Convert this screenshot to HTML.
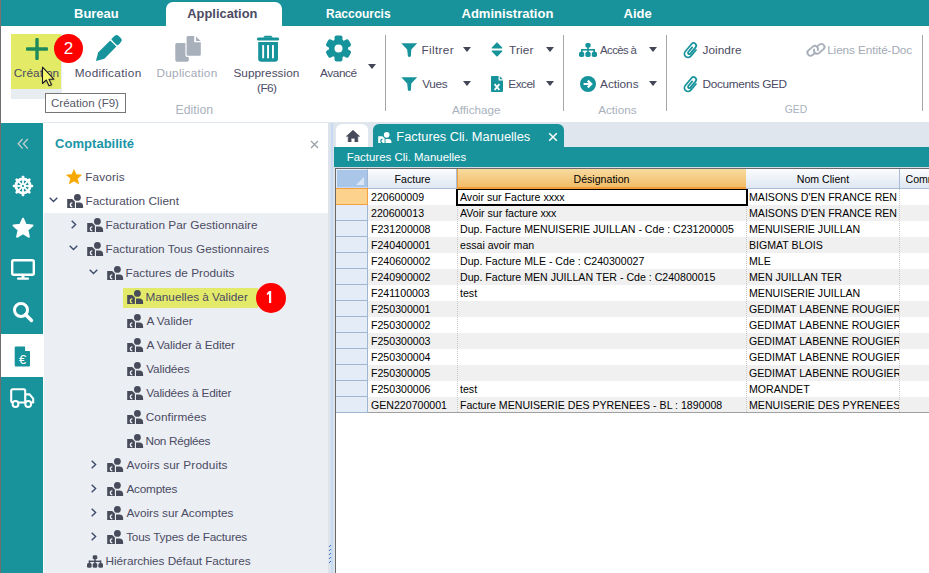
<!DOCTYPE html>
<html><head><meta charset="utf-8">
<style>
*{margin:0;padding:0;box-sizing:border-box}
html,body{width:929px;height:573px;overflow:hidden;background:#fff;font-family:"Liberation Sans",sans-serif}
.a{position:absolute}
.t{position:absolute;white-space:nowrap;line-height:16px;height:16px}
.sep{position:absolute;width:1px;background:#a7a7a7;top:35px;height:76px}
.tri{position:absolute;width:0;height:0;border-left:4.5px solid transparent;border-right:4.5px solid transparent;border-top:5.2px solid #434656}
.g{position:absolute;font-size:10.6px;color:#000;line-height:16px;height:16px;white-space:nowrap;overflow:hidden}
</style></head><body>

<div class="a" style="left:0;top:0;width:929px;height:26px;background:#19939b"></div>
<div class="a" style="left:166px;top:2px;width:116px;height:24px;background:#fff;border-radius:7px 7px 0 0"></div>
<div class="t" style="left:74.09px;top:6px;font-size:12.93px;color:#fff;font-weight:bold;">Bureau</div>
<div class="t" style="left:187.31px;top:6px;font-size:12.88px;color:#4b4b63;font-weight:bold;">Application</div>
<div class="t" style="left:326.06px;top:6px;font-size:11.98px;color:#fff;font-weight:bold;">Raccourcis</div>
<div class="t" style="left:461.51px;top:6px;font-size:13.02px;color:#fff;font-weight:bold;">Administration</div>
<div class="t" style="left:623.61px;top:6px;font-size:13.00px;color:#fff;font-weight:bold;">Aide</div>
<div class="a" style="left:0;top:26px;width:1px;height:547px;background:#6e6e6e"></div>
<div class="a" style="left:0;top:0;width:1px;height:26px;background:#7d7070"></div>
<div class="a" style="left:43px;top:122px;width:886px;height:1px;background:#dfe6ee"></div>
<div class="a" style="left:11px;top:34px;width:51px;height:65px;background:#e8edf2"></div>
<div class="a" style="left:11px;top:34px;width:50px;height:55px;background:#e3ea66"></div>
<svg class="a" style="left:26px;top:38px" width="22" height="22"><rect x="9.3" y="0" width="3.4" height="22" rx="1" fill="#1e8a5c"/><rect x="0" y="9.3" width="22" height="3.4" rx="1" fill="#1e8a5c"/></svg>
<div class="t" style="left:13.71px;top:65px;font-size:11.80px;color:#4b4b63;letter-spacing:0.12px;">Création</div>
<svg class="a" style="left:90px;top:30px" width="36" height="36" viewBox="0 0 36 36"><g transform="translate(5.9 30.9) rotate(-45)" fill="#17939b"><path d="M0 0 L7.6 -4.4 H24.6 V4.4 H7.6 Z"/><rect x="26.1" y="-4.4" width="7.6" height="8.8" rx="2.6"/><rect x="26.1" y="-4.4" width="4" height="8.8"/></g></svg>
<div class="t" style="left:74.66px;top:65px;font-size:11.80px;color:#4b4b63;letter-spacing:0.33px;">Modification</div>
<svg class="a" style="left:170px;top:30px" width="36" height="36" viewBox="0 0 36 36"><rect x="5.3" y="12.9" width="13.5" height="18.8" rx="1.6" fill="#a8b0bb"/><path d="M16.6 7.4 a1.4 1.4 0 0 1 1.4 -1.4 H24.2 V12.2 H30.8 V24.4 a1.4 1.4 0 0 1 -1.4 1.4 H18 a1.4 1.4 0 0 1 -1.4 -1.4 Z" fill="#a8b0bb" stroke="#fff" stroke-width="2.4"/><path d="M16.6 7.4 a1.4 1.4 0 0 1 1.4 -1.4 H24.2 V12.2 H30.8 V24.4 a1.4 1.4 0 0 1 -1.4 1.4 H18 a1.4 1.4 0 0 1 -1.4 -1.4 Z" fill="#a8b0bb"/><path d="M26 6.4 L30.6 11 H26 Z" fill="#a8b0bb"/></svg>
<div class="t" style="left:156.56px;top:65px;font-size:11.80px;color:#a3aab5;letter-spacing:0.23px;">Duplication</div>
<div class="t" style="left:175.62px;top:102px;font-size:12.23px;color:#a9b1bd;">Edition</div>
<svg class="a" style="left:250px;top:30px" width="36" height="36" viewBox="0 0 36 36"><g fill="#17939b"><rect x="6.9" y="7.4" width="22.3" height="3.1" rx="1.5"/><path d="M13.3 7.8 L14.6 5.8 H21.4 L22.7 7.8 Z"/><path d="M8.2 11.9 H28 V28.7 a3 3 0 0 1 -3 3 H11.2 a3 3 0 0 1 -3 -3 Z"/></g><g fill="#fff"><rect x="12.2" y="15.1" width="1.9" height="13.2"/><rect x="17.1" y="15.1" width="1.9" height="13.2"/><rect x="22" y="15.1" width="1.9" height="13.2"/></g></svg>
<div class="t" style="left:233.41px;top:65px;font-size:11.80px;color:#4b4b63;letter-spacing:0.03px;">Suppression</div>
<div class="t" style="left:257.09px;top:80px;font-size:11.80px;color:#4b4b63;letter-spacing:-0.59px;">(F6)</div>
<svg class="a" style="left:325px;top:35px" width="27" height="27" viewBox="-13.5 -13.5 27 27"><g fill="#17939b"><circle r="9.5"/><rect x="-4" y="-13" width="8" height="26" rx="2"/><rect x="-4" y="-13" width="8" height="26" rx="2" transform="rotate(60)"/><rect x="-4" y="-13" width="8" height="26" rx="2" transform="rotate(120)"/></g><circle r="4" fill="#fff"/></svg>
<div class="t" style="left:320.00px;top:65px;font-size:11.80px;color:#4b4b63;letter-spacing:-0.40px;">Avancé</div>
<div class="tri" style="left:368px;top:64px"></div>
<div class="sep" style="left:385px"></div>
<svg class="a" style="left:401px;top:43px" width="17" height="14" viewBox="0 0 17 14"><path d="M0.3 0.2 H16.2 L10.3 6.6 L9.9 13.2 Q8.4 14.6 6.9 13.2 L6.2 6.6 Z" fill="#17939b"/></svg>
<div class="t" style="left:421.46px;top:42px;font-size:11.80px;color:#4b4b63;letter-spacing:0.33px;">Filtrer</div>
<div class="tri" style="left:463px;top:47px"></div>
<svg class="a" style="left:491px;top:42px" width="12" height="15" viewBox="0 0 12 15"><path d="M6 1 L10.8 5.9 H1.2 Z M1.2 9.1 H10.8 L6 14 Z" fill="#17939b" stroke="#17939b" stroke-width="1.1" stroke-linejoin="round"/></svg>
<div class="t" style="left:508.96px;top:42px;font-size:11.80px;color:#4b4b63;letter-spacing:0.18px;">Trier</div>
<div class="tri" style="left:546px;top:47px"></div>
<svg class="a" style="left:401px;top:77px" width="17" height="14" viewBox="0 0 17 14"><path d="M0.3 0.2 H16.2 L10.3 6.6 L9.9 13.2 Q8.4 14.6 6.9 13.2 L6.2 6.6 Z" fill="#17939b"/></svg>
<div class="t" style="left:422.28px;top:76px;font-size:11.80px;color:#4b4b63;letter-spacing:-0.35px;">Vues</div>
<div class="tri" style="left:463px;top:81px"></div>
<svg class="a" style="left:491px;top:76px" width="12" height="16" viewBox="0 0 12 16"><path d="M1 0 H7.6 V4.4 H12 V15 a1 1 0 0 1 -1 1 H1 a1 1 0 0 1 -1 -1 V1 a1 1 0 0 1 1 -1 Z" fill="#17939b"/><path d="M8.8 0.2 L11.8 3.2 H8.8 Z" fill="#17939b"/><path d="M3.6 8.2 L8.4 14 M8.4 8.2 L3.6 14" stroke="#fff" stroke-width="1.9"/></svg>
<div class="t" style="left:508.26px;top:76px;font-size:11.80px;color:#4b4b63;letter-spacing:-0.49px;">Excel</div>
<div class="tri" style="left:546px;top:81px"></div>
<div class="t" style="left:452.00px;top:102px;font-size:11.68px;color:#a9b1bd;">Affichage</div>
<div class="sep" style="left:563px"></div>
<svg class="a" style="left:579px;top:43px" width="18" height="14" viewBox="0 0 18 14"><g fill="#17939b"><rect x="6.4" y="0" width="5.2" height="4.6" rx="1.6"/><rect x="8.2" y="3" width="1.6" height="4"/><rect x="2" y="6" width="14" height="1.6"/><rect x="2" y="6" width="1.6" height="4"/><rect x="14.4" y="6" width="1.6" height="4"/><rect x="8.2" y="6" width="1.6" height="4"/><rect x="0" y="8.8" width="5.2" height="5.2" rx="1.7"/><rect x="6.4" y="8.8" width="5.2" height="5.2" rx="1.7"/><rect x="12.8" y="8.8" width="5.2" height="5.2" rx="1.7"/></g></svg>
<div class="t" style="left:600.10px;top:42px;font-size:11.35px;color:#4b4b63;letter-spacing:-0.60px;">Accès à</div>
<div class="tri" style="left:649px;top:47px"></div>
<svg class="a" style="left:580px;top:76px" width="16" height="16" viewBox="0 0 16 16"><circle cx="8" cy="8" r="8" fill="#17939b"/><path d="M3.6 8 H11 M7.8 4.6 L11.2 8 L7.8 11.4" stroke="#fff" stroke-width="2.2" fill="none"/></svg>
<div class="t" style="left:600.10px;top:76px;font-size:11.80px;color:#4b4b63;letter-spacing:-0.04px;">Actions</div>
<div class="tri" style="left:649px;top:81px"></div>
<div class="t" style="left:598.20px;top:102px;font-size:11.70px;color:#a9b1bd;">Actions</div>
<div class="sep" style="left:666px"></div>
<svg class="a" style="left:680px;top:38px" width="22" height="22" viewBox="0 0 22 22"><path transform="translate(11 12.3) rotate(40) translate(0 -8.6)" d="M3.6 5.2 V13.2 A3.6 3.6 0 0 1 -3.6 13.2 V3.4 A2.6 2.6 0 0 1 1.6 3.4 V11.6 A1.3 1.3 0 0 1 -1 11.6 V5.6" stroke="#17939b" stroke-width="1.75" fill="none" stroke-linecap="round"/></svg>
<div class="t" style="left:702.46px;top:42px;font-size:11.80px;color:#4b4b63;letter-spacing:0.05px;">Joindre</div>
<svg class="a" style="left:680px;top:72px" width="22" height="22" viewBox="0 0 22 22"><path transform="translate(11 12.3) rotate(40) translate(0 -8.6)" d="M3.6 5.2 V13.2 A3.6 3.6 0 0 1 -3.6 13.2 V3.4 A2.6 2.6 0 0 1 1.6 3.4 V11.6 A1.3 1.3 0 0 1 -1 11.6 V5.6" stroke="#17939b" stroke-width="1.75" fill="none" stroke-linecap="round"/></svg>
<div class="t" style="left:702.46px;top:76px;font-size:11.80px;color:#4b4b63;letter-spacing:-0.32px;">Documents GED</div>
<svg class="a" style="left:802px;top:38px" width="28" height="24" viewBox="0 0 28 24"><g stroke="#a9b0bb" stroke-width="1.9" fill="none" stroke-linecap="round"><path transform="translate(10.7 12.8) rotate(-40)" d="M0.3 3.1 H-2.8 A3.1 3.1 0 0 1 -2.8 -3.1 H2.8 A3.1 3.1 0 0 1 4.35 2.68"/><path transform="translate(17.2 10.8) rotate(140)" d="M0.3 3.1 H-2.8 A3.1 3.1 0 0 1 -2.8 -3.1 H2.8 A3.1 3.1 0 0 1 4.35 2.68"/></g></svg>
<div class="t" style="left:827.16px;top:42px;font-size:11.80px;color:#a3aab5;letter-spacing:-0.10px;">Liens Entité-Doc</div>
<div class="t" style="left:784.68px;top:102px;font-size:10.39px;color:#a9b1bd;">GED</div>
<div class="sep" style="left:922px"></div>
<div class="a" style="left:45px;top:93px;width:81px;height:20px;background:#fff;border:1px solid #767676"></div>
<div class="t" style="left:51.02px;top:95px;font-size:11.54px;color:#575766;">Création (F9)</div>
<div class="a" style="left:54px;top:34px;width:29px;height:29px;border-radius:50%;background:#fe0000"></div>
<div class="t" style="left:54px;top:40px;width:29px;text-align:center;color:#fff;font-size:17px;line-height:17px;height:17px">2</div>
<svg class="a" style="left:38px;top:63px" width="22" height="28" viewBox="0 0 22 28"><path transform="translate(5.5 5.2)" d="M0 0 V16.3 L3.8 12.8 L6.5 18.6 L9 17.6 L6.5 12 H11.3 Z" fill="#000" opacity="0.18" style="filter:blur(1px)" /><path transform="translate(4.5 4.2)" d="M0 0 V16.3 L3.8 12.8 L6.5 18.6 L9 17.6 L6.5 12 H11.3 Z" fill="#f8f86e" stroke="#1c1c2a" stroke-width="1.1" stroke-linejoin="round"/></svg>
<div class="a" style="left:1px;top:123px;width:42px;height:450px;background:#19939b"></div>
<div class="a" style="left:1px;top:334px;width:42px;height:43px;background:#fff"></div>
<div class="a" style="left:43px;top:123px;width:285px;height:90px;background:#fff"></div>
<div class="a" style="left:44px;top:213px;width:284px;height:360px;background:#ebeff4"></div>
<div class="a" style="left:328px;top:123px;width:7px;height:450px;background:#dce3ea"></div>
<div class="a" style="left:331px;top:123px;width:1.5px;height:450px;background:#c6daf3"></div>
<div class="a" style="left:335px;top:123px;width:594px;height:24px;background:#dfe6ee"></div>

<svg class="a" style="left:17px;top:138px" width="12" height="12" viewBox="0 0 12 12"><path d="M5.6 1 L1.2 5.8 L5.6 10.6 M10.8 1 L6.4 5.8 L10.8 10.6" stroke="#c4cfd0" stroke-width="1.3" fill="none"/></svg>
<svg class="a" style="left:12px;top:175px" width="22" height="22" viewBox="-11 -11 22 22"><g fill="#fff"><rect x="-1.3" y="-10.2" width="2.6" height="3" rx="0.8" transform="rotate(0)"/><rect x="-1.3" y="-10.2" width="2.6" height="3" rx="0.8" transform="rotate(45)"/><rect x="-1.3" y="-10.2" width="2.6" height="3" rx="0.8" transform="rotate(90)"/><rect x="-1.3" y="-10.2" width="2.6" height="3" rx="0.8" transform="rotate(135)"/><rect x="-1.3" y="-10.2" width="2.6" height="3" rx="0.8" transform="rotate(180)"/><rect x="-1.3" y="-10.2" width="2.6" height="3" rx="0.8" transform="rotate(225)"/><rect x="-1.3" y="-10.2" width="2.6" height="3" rx="0.8" transform="rotate(270)"/><rect x="-1.3" y="-10.2" width="2.6" height="3" rx="0.8" transform="rotate(315)"/><rect x="-0.9" y="-6.4" width="1.8" height="4.4" transform="rotate(0)"/><rect x="-0.9" y="-6.4" width="1.8" height="4.4" transform="rotate(45)"/><rect x="-0.9" y="-6.4" width="1.8" height="4.4" transform="rotate(90)"/><rect x="-0.9" y="-6.4" width="1.8" height="4.4" transform="rotate(135)"/><rect x="-0.9" y="-6.4" width="1.8" height="4.4" transform="rotate(180)"/><rect x="-0.9" y="-6.4" width="1.8" height="4.4" transform="rotate(225)"/><rect x="-0.9" y="-6.4" width="1.8" height="4.4" transform="rotate(270)"/><rect x="-0.9" y="-6.4" width="1.8" height="4.4" transform="rotate(315)"/></g><circle r="7.1" stroke="#fff" stroke-width="2.8" fill="none"/><circle r="2.7" fill="#fff"/><circle r="1.1" fill="#19939b"/></svg>
<svg class="a" style="left:12px;top:217px" width="22" height="22" viewBox="0 0 24 24"><path d="M12 2 L14.9 8.6 L22.2 9.3 L16.7 14.2 L18.3 21.4 L12 17.6 L5.7 21.4 L7.3 14.2 L1.8 9.3 L9.1 8.6 Z" fill="#fff" stroke="#fff" stroke-width="2.4" stroke-linejoin="round"/></svg>
<svg class="a" style="left:11px;top:259px" width="24" height="22" viewBox="0 0 24 22"><rect x="1.2" y="1.2" width="21.6" height="14.6" rx="1.5" fill="none" stroke="#fff" stroke-width="2.4"/><rect x="10.5" y="16" width="3" height="3" fill="#fff"/><rect x="6" y="18.5" width="12" height="2.2" rx="1" fill="#fff"/></svg>
<svg class="a" style="left:12px;top:301px" width="22" height="22" viewBox="0 0 22 22"><circle cx="9" cy="9" r="6.5" fill="none" stroke="#fff" stroke-width="3"/><path d="M13.5 13.5 L19.5 19.5" stroke="#fff" stroke-width="3.4" stroke-linecap="round"/></svg>
<svg class="a" style="left:14px;top:346px" width="17" height="21" viewBox="0 0 17 21"><path d="M1.5 0.4 H10.8 L16 5.6 V19.2 a1.2 1.2 0 0 1 -1.2 1.2 H1.9 a1.2 1.2 0 0 1 -1.2 -1.2 V1.6 a1.2 1.2 0 0 1 1.2 -1.2 Z" fill="#17939b"/><path d="M11.3 0.4 V5.1 H16" fill="#fff" stroke="#17939b" stroke-width="0"/><path d="M11.3 0.4 L16 5.1 H11.3 Z" fill="#fff"/><text x="8.6" y="18.4" font-family="Liberation Sans" font-size="13" fill="#fff" text-anchor="middle">&#8364;</text></svg>
<svg class="a" style="left:9px;top:387px" width="26" height="21" viewBox="0 0 26 21"><g fill="none" stroke="#fff" stroke-width="2.1" stroke-linejoin="round"><rect x="2.2" y="2.2" width="14" height="13.3" rx="1.6"/><path d="M16.2 7.4 H20.6 L24.2 11.6 V15.5 H16.2"/></g><circle cx="6.5" cy="17" r="2.9" fill="#19939b" stroke="#fff" stroke-width="2"/><circle cx="19.2" cy="17" r="2.9" fill="#19939b" stroke="#fff" stroke-width="2"/></svg>

<div class="t" style="left:55.08px;top:136px;font-size:13.06px;color:#1b95a6;font-weight:bold;">Comptabilité</div>
<svg class="a" style="left:310px;top:140px" width="9" height="9" viewBox="0 0 9 9"><path d="M1 1 L8 8 M8 1 L1 8" stroke="#9aa0a8" stroke-width="1.3"/></svg>
<svg class="a" style="left:66px;top:169px" width="16" height="16" viewBox="0 0 24 23"><path d="M12 0.5 L15.2 7.9 L23.2 8.6 L17.1 13.9 L19 21.8 L12 17.6 L5 21.8 L6.9 13.9 L0.8 8.6 L8.8 7.9 Z" fill="#f6a800" stroke="#f6a800" stroke-width="1" stroke-linejoin="round"/></svg>
<div class="t" style="left:85.26px;top:169px;font-size:11.80px;color:#4b4b63;letter-spacing:0.14px;">Favoris</div>
<div class="a" style="left:123px;top:288px;width:135px;height:20px;background:#e3ea6a"></div>
<svg class="a" style="left:49px;top:197px" width="9" height="6" viewBox="0 0 9 6"><path d="M0.7 0.7 L4.5 4.6 L8.3 0.7" stroke="#3e4c6b" stroke-width="1.4" fill="none"/></svg>
<svg class="a" style="left:67px;top:194px" width="17" height="14" viewBox="0 0 17 14"><circle cx="10.4" cy="3.4" r="3.4" fill="#474b5a"/><path d="M9 14 V8.5 H12.4 a3.7 3.6 0 0 1 3.7 3.6 V14 Z" fill="#474b5a"/><path d="M0.2 5 H5.2 L7.9 7.6 V14 H0.2 Z" fill="#474b5a"/><path d="M5.3 8.6 A2.5 2.2 0 0 0 5.3 12.9" stroke="#fff" stroke-width="1.45" fill="none"/></svg>
<div class="t" style="left:85.46px;top:193px;font-size:11.80px;color:#4b4b63;letter-spacing:0.06px;">Facturation Client</div>
<svg class="a" style="left:71px;top:220px" width="6" height="9" viewBox="0 0 6 9"><path d="M0.7 0.7 L4.6 4.5 L0.7 8.3" stroke="#3e4c6b" stroke-width="1.4" fill="none"/></svg>
<svg class="a" style="left:87px;top:218px" width="17" height="14" viewBox="0 0 17 14"><circle cx="10.4" cy="3.4" r="3.4" fill="#474b5a"/><path d="M9 14 V8.5 H12.4 a3.7 3.6 0 0 1 3.7 3.6 V14 Z" fill="#474b5a"/><path d="M0.2 5 H5.2 L7.9 7.6 V14 H0.2 Z" fill="#474b5a"/><path d="M5.3 8.6 A2.5 2.2 0 0 0 5.3 12.9" stroke="#ebeff4" stroke-width="1.45" fill="none"/></svg>
<div class="t" style="left:105.46px;top:217px;font-size:11.80px;color:#4b4b63;letter-spacing:0.05px;">Facturation Par Gestionnaire</div>
<svg class="a" style="left:69px;top:245px" width="9" height="6" viewBox="0 0 9 6"><path d="M0.7 0.7 L4.5 4.6 L8.3 0.7" stroke="#3e4c6b" stroke-width="1.4" fill="none"/></svg>
<svg class="a" style="left:87px;top:242px" width="17" height="14" viewBox="0 0 17 14"><circle cx="10.4" cy="3.4" r="3.4" fill="#474b5a"/><path d="M9 14 V8.5 H12.4 a3.7 3.6 0 0 1 3.7 3.6 V14 Z" fill="#474b5a"/><path d="M0.2 5 H5.2 L7.9 7.6 V14 H0.2 Z" fill="#474b5a"/><path d="M5.3 8.6 A2.5 2.2 0 0 0 5.3 12.9" stroke="#ebeff4" stroke-width="1.45" fill="none"/></svg>
<div class="t" style="left:105.46px;top:241px;font-size:11.80px;color:#4b4b63;letter-spacing:0.02px;">Facturation Tous Gestionnaires</div>
<svg class="a" style="left:89px;top:269px" width="9" height="6" viewBox="0 0 9 6"><path d="M0.7 0.7 L4.5 4.6 L8.3 0.7" stroke="#3e4c6b" stroke-width="1.4" fill="none"/></svg>
<svg class="a" style="left:107px;top:266px" width="17" height="14" viewBox="0 0 17 14"><circle cx="10.4" cy="3.4" r="3.4" fill="#474b5a"/><path d="M9 14 V8.5 H12.4 a3.7 3.6 0 0 1 3.7 3.6 V14 Z" fill="#474b5a"/><path d="M0.2 5 H5.2 L7.9 7.6 V14 H0.2 Z" fill="#474b5a"/><path d="M5.3 8.6 A2.5 2.2 0 0 0 5.3 12.9" stroke="#ebeff4" stroke-width="1.45" fill="none"/></svg>
<div class="t" style="left:125.46px;top:265px;font-size:11.80px;color:#4b4b63;letter-spacing:0.01px;">Factures de Produits</div>
<svg class="a" style="left:127px;top:290px" width="17" height="14" viewBox="0 0 17 14"><circle cx="10.4" cy="3.4" r="3.4" fill="#474b5a"/><path d="M9 14 V8.5 H12.4 a3.7 3.6 0 0 1 3.7 3.6 V14 Z" fill="#474b5a"/><path d="M0.2 5 H5.2 L7.9 7.6 V14 H0.2 Z" fill="#474b5a"/><path d="M5.3 8.6 A2.5 2.2 0 0 0 5.3 12.9" stroke="#e3ea6a" stroke-width="1.45" fill="none"/></svg>
<div class="t" style="left:145.46px;top:289px;font-size:11.80px;color:#4b4b63;letter-spacing:-0.02px;">Manuelles à Valider</div>
<svg class="a" style="left:127px;top:314px" width="17" height="14" viewBox="0 0 17 14"><circle cx="10.4" cy="3.4" r="3.4" fill="#474b5a"/><path d="M9 14 V8.5 H12.4 a3.7 3.6 0 0 1 3.7 3.6 V14 Z" fill="#474b5a"/><path d="M0.2 5 H5.2 L7.9 7.6 V14 H0.2 Z" fill="#474b5a"/><path d="M5.3 8.6 A2.5 2.2 0 0 0 5.3 12.9" stroke="#ebeff4" stroke-width="1.45" fill="none"/></svg>
<div class="t" style="left:146.40px;top:313px;font-size:11.80px;color:#4b4b63;letter-spacing:-0.01px;">A Valider</div>
<svg class="a" style="left:127px;top:338px" width="17" height="14" viewBox="0 0 17 14"><circle cx="10.4" cy="3.4" r="3.4" fill="#474b5a"/><path d="M9 14 V8.5 H12.4 a3.7 3.6 0 0 1 3.7 3.6 V14 Z" fill="#474b5a"/><path d="M0.2 5 H5.2 L7.9 7.6 V14 H0.2 Z" fill="#474b5a"/><path d="M5.3 8.6 A2.5 2.2 0 0 0 5.3 12.9" stroke="#ebeff4" stroke-width="1.45" fill="none"/></svg>
<div class="t" style="left:146.40px;top:337px;font-size:11.80px;color:#4b4b63;letter-spacing:-0.10px;">A Valider à Editer</div>
<svg class="a" style="left:127px;top:362px" width="17" height="14" viewBox="0 0 17 14"><circle cx="10.4" cy="3.4" r="3.4" fill="#474b5a"/><path d="M9 14 V8.5 H12.4 a3.7 3.6 0 0 1 3.7 3.6 V14 Z" fill="#474b5a"/><path d="M0.2 5 H5.2 L7.9 7.6 V14 H0.2 Z" fill="#474b5a"/><path d="M5.3 8.6 A2.5 2.2 0 0 0 5.3 12.9" stroke="#ebeff4" stroke-width="1.45" fill="none"/></svg>
<div class="t" style="left:146.28px;top:361px;font-size:11.80px;color:#4b4b63;letter-spacing:-0.15px;">Validées</div>
<svg class="a" style="left:127px;top:386px" width="17" height="14" viewBox="0 0 17 14"><circle cx="10.4" cy="3.4" r="3.4" fill="#474b5a"/><path d="M9 14 V8.5 H12.4 a3.7 3.6 0 0 1 3.7 3.6 V14 Z" fill="#474b5a"/><path d="M0.2 5 H5.2 L7.9 7.6 V14 H0.2 Z" fill="#474b5a"/><path d="M5.3 8.6 A2.5 2.2 0 0 0 5.3 12.9" stroke="#ebeff4" stroke-width="1.45" fill="none"/></svg>
<div class="t" style="left:146.28px;top:385px;font-size:11.80px;color:#4b4b63;letter-spacing:-0.20px;">Validées à Editer</div>
<svg class="a" style="left:127px;top:410px" width="17" height="14" viewBox="0 0 17 14"><circle cx="10.4" cy="3.4" r="3.4" fill="#474b5a"/><path d="M9 14 V8.5 H12.4 a3.7 3.6 0 0 1 3.7 3.6 V14 Z" fill="#474b5a"/><path d="M0.2 5 H5.2 L7.9 7.6 V14 H0.2 Z" fill="#474b5a"/><path d="M5.3 8.6 A2.5 2.2 0 0 0 5.3 12.9" stroke="#ebeff4" stroke-width="1.45" fill="none"/></svg>
<div class="t" style="left:145.81px;top:409px;font-size:11.80px;color:#4b4b63;letter-spacing:0.04px;">Confirmées</div>
<svg class="a" style="left:127px;top:434px" width="17" height="14" viewBox="0 0 17 14"><circle cx="10.4" cy="3.4" r="3.4" fill="#474b5a"/><path d="M9 14 V8.5 H12.4 a3.7 3.6 0 0 1 3.7 3.6 V14 Z" fill="#474b5a"/><path d="M0.2 5 H5.2 L7.9 7.6 V14 H0.2 Z" fill="#474b5a"/><path d="M5.3 8.6 A2.5 2.2 0 0 0 5.3 12.9" stroke="#ebeff4" stroke-width="1.45" fill="none"/></svg>
<div class="t" style="left:145.46px;top:433px;font-size:11.80px;color:#4b4b63;letter-spacing:-0.33px;">Non Réglées</div>
<svg class="a" style="left:91px;top:460px" width="6" height="9" viewBox="0 0 6 9"><path d="M0.7 0.7 L4.6 4.5 L0.7 8.3" stroke="#3e4c6b" stroke-width="1.4" fill="none"/></svg>
<svg class="a" style="left:107px;top:458px" width="17" height="14" viewBox="0 0 17 14"><circle cx="10.4" cy="3.4" r="3.4" fill="#474b5a"/><path d="M9 14 V8.5 H12.4 a3.7 3.6 0 0 1 3.7 3.6 V14 Z" fill="#474b5a"/><path d="M0.2 5 H5.2 L7.9 7.6 V14 H0.2 Z" fill="#474b5a"/><path d="M5.3 8.6 A2.5 2.2 0 0 0 5.3 12.9" stroke="#ebeff4" stroke-width="1.45" fill="none"/></svg>
<div class="t" style="left:126.40px;top:457px;font-size:11.80px;color:#4b4b63;letter-spacing:0.13px;">Avoirs sur Produits</div>
<svg class="a" style="left:91px;top:484px" width="6" height="9" viewBox="0 0 6 9"><path d="M0.7 0.7 L4.6 4.5 L0.7 8.3" stroke="#3e4c6b" stroke-width="1.4" fill="none"/></svg>
<svg class="a" style="left:107px;top:482px" width="17" height="14" viewBox="0 0 17 14"><circle cx="10.4" cy="3.4" r="3.4" fill="#474b5a"/><path d="M9 14 V8.5 H12.4 a3.7 3.6 0 0 1 3.7 3.6 V14 Z" fill="#474b5a"/><path d="M0.2 5 H5.2 L7.9 7.6 V14 H0.2 Z" fill="#474b5a"/><path d="M5.3 8.6 A2.5 2.2 0 0 0 5.3 12.9" stroke="#ebeff4" stroke-width="1.45" fill="none"/></svg>
<div class="t" style="left:126.40px;top:481px;font-size:11.80px;color:#4b4b63;letter-spacing:-0.22px;">Acomptes</div>
<svg class="a" style="left:91px;top:508px" width="6" height="9" viewBox="0 0 6 9"><path d="M0.7 0.7 L4.6 4.5 L0.7 8.3" stroke="#3e4c6b" stroke-width="1.4" fill="none"/></svg>
<svg class="a" style="left:107px;top:506px" width="17" height="14" viewBox="0 0 17 14"><circle cx="10.4" cy="3.4" r="3.4" fill="#474b5a"/><path d="M9 14 V8.5 H12.4 a3.7 3.6 0 0 1 3.7 3.6 V14 Z" fill="#474b5a"/><path d="M0.2 5 H5.2 L7.9 7.6 V14 H0.2 Z" fill="#474b5a"/><path d="M5.3 8.6 A2.5 2.2 0 0 0 5.3 12.9" stroke="#ebeff4" stroke-width="1.45" fill="none"/></svg>
<div class="t" style="left:126.40px;top:505px;font-size:11.80px;color:#4b4b63;letter-spacing:-0.02px;">Avoirs sur Acomptes</div>
<svg class="a" style="left:91px;top:532px" width="6" height="9" viewBox="0 0 6 9"><path d="M0.7 0.7 L4.6 4.5 L0.7 8.3" stroke="#3e4c6b" stroke-width="1.4" fill="none"/></svg>
<svg class="a" style="left:107px;top:530px" width="17" height="14" viewBox="0 0 17 14"><circle cx="10.4" cy="3.4" r="3.4" fill="#474b5a"/><path d="M9 14 V8.5 H12.4 a3.7 3.6 0 0 1 3.7 3.6 V14 Z" fill="#474b5a"/><path d="M0.2 5 H5.2 L7.9 7.6 V14 H0.2 Z" fill="#474b5a"/><path d="M5.3 8.6 A2.5 2.2 0 0 0 5.3 12.9" stroke="#ebeff4" stroke-width="1.45" fill="none"/></svg>
<div class="t" style="left:126.16px;top:529px;font-size:11.80px;color:#4b4b63;letter-spacing:-0.19px;">Tous Types de Factures</div>
<svg class="a" style="left:86.5px;top:555px" width="16" height="13" viewBox="0 0 18 14"><g fill="#474b5a"><rect x="6.4" y="0" width="5.2" height="4.6" rx="1.6"/><rect x="8.2" y="3" width="1.6" height="4"/><rect x="2" y="6" width="14" height="1.6"/><rect x="2" y="6" width="1.6" height="4"/><rect x="14.4" y="6" width="1.6" height="4"/><rect x="8.2" y="6" width="1.6" height="4"/><rect x="0" y="8.8" width="5.2" height="5.2" rx="1.7"/><rect x="6.4" y="8.8" width="5.2" height="5.2" rx="1.7"/><rect x="12.8" y="8.8" width="5.2" height="5.2" rx="1.7"/></g></svg>
<div class="t" style="left:105.56px;top:553px;font-size:11.80px;color:#4b4b63;letter-spacing:-0.07px;">Hiérarchies Défaut Factures</div>
<div class="a" style="left:256px;top:283px;width:30px;height:30px;border-radius:50%;background:#fe0000"></div>
<svg class="a" style="left:262px;top:286px" width="16" height="22" viewBox="0 0 16 22"><path d="M6.9 5 H9.2 V17.1 H7 V8 Q6.1 8.6 4.9 9 V7.1 Q6.3 6.4 6.9 5 Z" fill="#fff"/></svg>
<svg class="a" style="left:328px;top:544px" width="4" height="22" viewBox="0 0 4 22" shape-rendering="crispEdges"><g fill="#2f6ed0"><rect x="2" y="1" width="1" height="1"/><rect x="1" y="2" width="1" height="1"/><rect x="2" y="5" width="1" height="1"/><rect x="1" y="6" width="1" height="1"/><rect x="2" y="9" width="1" height="1"/><rect x="1" y="10" width="1" height="1"/><rect x="2" y="13" width="1" height="1"/><rect x="1" y="14" width="1" height="1"/><rect x="2" y="17" width="1" height="1"/><rect x="1" y="18" width="1" height="1"/></g></svg>
<div class="a" style="left:336px;top:124px;width:32px;height:23px;background:#fff;border-radius:6px 6px 0 0"></div>
<svg class="a" style="left:346px;top:130px" width="14" height="12" viewBox="0 0 14 12"><path d="M7 0.2 L13.6 6.3 H11.8 V12 H8.9 V8.3 H5.1 V12 H2.2 V6.3 H0.4 Z" fill="#474a5a" stroke="#474a5a" stroke-width="0.6" stroke-linejoin="round"/></svg>
<div class="a" style="left:373px;top:124px;width:191px;height:23px;background:#19939b;border-radius:6px 6px 0 0"></div>
<svg class="a" style="left:377.8px;top:131.5px" width="14.2" height="11.7" viewBox="0 0 17 14"><circle cx="10.4" cy="3.4" r="3.4" fill="#fff"/><path d="M9 14 V8.5 H12.4 a3.7 3.6 0 0 1 3.7 3.6 V14 Z" fill="#fff"/><path d="M0.2 5 H5.2 L7.9 7.6 V14 H0.2 Z" fill="#fff"/><path d="M5.3 8.6 A2.5 2.2 0 0 0 5.3 12.9" stroke="#19939b" stroke-width="1.45" fill="none"/></svg>
<div class="t" style="left:396.37px;top:129px;font-size:12.82px;color:#fff;">Factures Cli. Manuelles</div>
<svg class="a" style="left:548px;top:132px" width="10" height="10" viewBox="0 0 10 10"><path d="M1.2 1.2 L8.8 8.8 M8.8 1.2 L1.2 8.8" stroke="#fff" stroke-width="1.5"/></svg>
<div class="a" style="left:334px;top:147px;width:595px;height:20px;background:#19939b"></div>
<div class="t" style="left:346.79px;top:149px;font-size:11.43px;color:#fff;">Factures Cli. Manuelles</div>
<div class="a" style="left:335px;top:167px;width:594px;height:1px;background:#d6dde5"></div>
<div class="a" style="left:335px;top:168px;width:594px;height:1px;background:#6a6a6a"></div>
<div class="a" style="left:335px;top:168px;width:1px;height:405px;background:#6a6a6a"></div>
<div class="a" style="left:336px;top:169px;width:32px;height:19px;background:#a9c5e8;border-top:1px solid #e6eef9;border-left:1px solid #e6eef9;border-right:1px solid #9fb7d5;border-bottom:1px solid #c6daf3"></div>
<svg class="a" style="left:356px;top:177px" width="8" height="8" viewBox="0 0 8 8"><path d="M8 0 V8 H0 Z" fill="#dbe6f5"/></svg>
<div class="a" style="left:368px;top:169px;width:89px;height:20px;background:linear-gradient(#fbfcfe,#dfe7f2);border-right:1px solid #a6bcd8;border-bottom:1px solid #a6bcd8"></div>
<div class="g" style="left:368px;top:171px;width:89px;text-align:center">Facture</div>
<div class="a" style="left:457px;top:169px;width:289px;height:20px;background:linear-gradient(#f8dba0,#f2bd68);border-left:1px solid #f0a040;border-bottom:2px solid #f09a38"></div>
<div class="g" style="left:457px;top:171px;width:289px;text-align:center">Désignation</div>
<div class="a" style="left:746px;top:169px;width:154px;height:20px;background:linear-gradient(#fbfcfe,#dfe7f2);border-right:1px solid #a6bcd8;border-bottom:1px solid #a6bcd8"></div>
<div class="g" style="left:746px;top:171px;width:154px;text-align:center">Nom Client</div>
<div class="a" style="left:900px;top:169px;width:100px;height:20px;background:linear-gradient(#fbfcfe,#dfe7f2);border-right:1px solid #a6bcd8;border-bottom:1px solid #a6bcd8"></div>
<div class="g" style="left:905.5px;top:171px">Comm</div>
<div class="a" style="left:368px;top:189px;width:561px;height:16px;background:#ffffff"></div>
<div class="a" style="left:336px;top:188px;width:32px;height:17px;background:#fdd28c;border-top:1px solid #f5a040;border-right:1px solid #f5a040;border-bottom:1px solid #f5a040"></div>
<div class="g" style="left:371px;top:189px;width:85px">220600009</div>
<div class="g" style="left:460px;top:189px;width:285px">Avoir sur Facture xxxx</div>
<div class="g" style="left:749px;top:189px;width:150px">MAISONS D'EN FRANCE REN</div>
<div class="a" style="left:368px;top:205px;width:561px;height:16px;background:#f0f0f0"></div>
<div class="a" style="left:336px;top:205px;width:32px;height:16px;background:#e4ecf7;border-right:1px solid #9fb7d5;border-bottom:1px solid #9fb7d5"></div>
<div class="g" style="left:371px;top:205px;width:85px">220600013</div>
<div class="g" style="left:460px;top:205px;width:285px">AVoir sur facture xxx</div>
<div class="g" style="left:749px;top:205px;width:150px">MAISONS D'EN FRANCE REN</div>
<div class="a" style="left:368px;top:221px;width:561px;height:16px;background:#ffffff"></div>
<div class="a" style="left:336px;top:221px;width:32px;height:16px;background:#e4ecf7;border-right:1px solid #9fb7d5;border-bottom:1px solid #9fb7d5"></div>
<div class="g" style="left:371px;top:221px;width:85px">F231200008</div>
<div class="g" style="left:460px;top:221px;width:285px">Dup. Facture MENUISERIE JUILLAN - Cde : C231200005</div>
<div class="g" style="left:749px;top:221px;width:150px">MENUISERIE JUILLAN</div>
<div class="a" style="left:368px;top:237px;width:561px;height:16px;background:#f0f0f0"></div>
<div class="a" style="left:336px;top:237px;width:32px;height:16px;background:#e4ecf7;border-right:1px solid #9fb7d5;border-bottom:1px solid #9fb7d5"></div>
<div class="g" style="left:371px;top:237px;width:85px">F240400001</div>
<div class="g" style="left:460px;top:237px;width:285px">essai avoir man</div>
<div class="g" style="left:749px;top:237px;width:150px">BIGMAT BLOIS</div>
<div class="a" style="left:368px;top:253px;width:561px;height:16px;background:#ffffff"></div>
<div class="a" style="left:336px;top:253px;width:32px;height:16px;background:#e4ecf7;border-right:1px solid #9fb7d5;border-bottom:1px solid #9fb7d5"></div>
<div class="g" style="left:371px;top:253px;width:85px">F240600002</div>
<div class="g" style="left:460px;top:253px;width:285px">Dup. Facture MLE - Cde : C240300027</div>
<div class="g" style="left:749px;top:253px;width:150px">MLE</div>
<div class="a" style="left:368px;top:269px;width:561px;height:16px;background:#f0f0f0"></div>
<div class="a" style="left:336px;top:269px;width:32px;height:16px;background:#e4ecf7;border-right:1px solid #9fb7d5;border-bottom:1px solid #9fb7d5"></div>
<div class="g" style="left:371px;top:269px;width:85px">F240900002</div>
<div class="g" style="left:460px;top:269px;width:285px">Dup. Facture MEN JUILLAN TER - Cde : C240800015</div>
<div class="g" style="left:749px;top:269px;width:150px">MEN JUILLAN TER</div>
<div class="a" style="left:368px;top:285px;width:561px;height:16px;background:#ffffff"></div>
<div class="a" style="left:336px;top:285px;width:32px;height:16px;background:#e4ecf7;border-right:1px solid #9fb7d5;border-bottom:1px solid #9fb7d5"></div>
<div class="g" style="left:371px;top:285px;width:85px">F241100003</div>
<div class="g" style="left:460px;top:285px;width:285px">test</div>
<div class="g" style="left:749px;top:285px;width:150px">MENUISERIE JUILLAN</div>
<div class="a" style="left:368px;top:301px;width:561px;height:16px;background:#f0f0f0"></div>
<div class="a" style="left:336px;top:301px;width:32px;height:16px;background:#e4ecf7;border-right:1px solid #9fb7d5;border-bottom:1px solid #9fb7d5"></div>
<div class="g" style="left:371px;top:301px;width:85px">F250300001</div>
<div class="g" style="left:460px;top:301px;width:285px"></div>
<div class="g" style="left:749px;top:301px;width:150px">GEDIMAT LABENNE ROUGIER</div>
<div class="a" style="left:368px;top:317px;width:561px;height:16px;background:#ffffff"></div>
<div class="a" style="left:336px;top:317px;width:32px;height:16px;background:#e4ecf7;border-right:1px solid #9fb7d5;border-bottom:1px solid #9fb7d5"></div>
<div class="g" style="left:371px;top:317px;width:85px">F250300002</div>
<div class="g" style="left:460px;top:317px;width:285px"></div>
<div class="g" style="left:749px;top:317px;width:150px">GEDIMAT LABENNE ROUGIER</div>
<div class="a" style="left:368px;top:333px;width:561px;height:16px;background:#f0f0f0"></div>
<div class="a" style="left:336px;top:333px;width:32px;height:16px;background:#e4ecf7;border-right:1px solid #9fb7d5;border-bottom:1px solid #9fb7d5"></div>
<div class="g" style="left:371px;top:333px;width:85px">F250300003</div>
<div class="g" style="left:460px;top:333px;width:285px"></div>
<div class="g" style="left:749px;top:333px;width:150px">GEDIMAT LABENNE ROUGIER</div>
<div class="a" style="left:368px;top:349px;width:561px;height:16px;background:#ffffff"></div>
<div class="a" style="left:336px;top:349px;width:32px;height:16px;background:#e4ecf7;border-right:1px solid #9fb7d5;border-bottom:1px solid #9fb7d5"></div>
<div class="g" style="left:371px;top:349px;width:85px">F250300004</div>
<div class="g" style="left:460px;top:349px;width:285px"></div>
<div class="g" style="left:749px;top:349px;width:150px">GEDIMAT LABENNE ROUGIER</div>
<div class="a" style="left:368px;top:365px;width:561px;height:16px;background:#f0f0f0"></div>
<div class="a" style="left:336px;top:365px;width:32px;height:16px;background:#e4ecf7;border-right:1px solid #9fb7d5;border-bottom:1px solid #9fb7d5"></div>
<div class="g" style="left:371px;top:365px;width:85px">F250300005</div>
<div class="g" style="left:460px;top:365px;width:285px"></div>
<div class="g" style="left:749px;top:365px;width:150px">GEDIMAT LABENNE ROUGIER</div>
<div class="a" style="left:368px;top:381px;width:561px;height:16px;background:#ffffff"></div>
<div class="a" style="left:336px;top:381px;width:32px;height:16px;background:#e4ecf7;border-right:1px solid #9fb7d5;border-bottom:1px solid #9fb7d5"></div>
<div class="g" style="left:371px;top:381px;width:85px">F250300006</div>
<div class="g" style="left:460px;top:381px;width:285px">test</div>
<div class="g" style="left:749px;top:381px;width:150px">MORANDET</div>
<div class="a" style="left:368px;top:397px;width:561px;height:16px;background:#f0f0f0"></div>
<div class="a" style="left:336px;top:397px;width:32px;height:16px;background:#e4ecf7;border-right:1px solid #9fb7d5;border-bottom:1px solid #9fb7d5"></div>
<div class="g" style="left:371px;top:397px;width:85px">GEN220700001</div>
<div class="g" style="left:460px;top:397px;width:285px">Facture MENUISERIE DES PYRENEES - BL : 1890008</div>
<div class="g" style="left:749px;top:397px;width:150px">MENUISERIE DES PYRENEES</div>
<div class="a" style="left:457px;top:189px;width:1px;height:224px;background:repeating-linear-gradient(#c8c8c8 0 1px,transparent 1px 2px)"></div>
<div class="a" style="left:746px;top:189px;width:1px;height:224px;background:repeating-linear-gradient(#c8c8c8 0 1px,transparent 1px 2px)"></div>
<div class="a" style="left:899px;top:189px;width:1px;height:224px;background:repeating-linear-gradient(#c8c8c8 0 1px,transparent 1px 2px)"></div>
<div class="a" style="left:368px;top:412px;width:561px;height:1px;background:#a0a0a0"></div>
<div class="a" style="left:456px;top:189px;width:292px;height:17px;border:2px solid #000;border-top-width:1px"></div>
</body></html>
